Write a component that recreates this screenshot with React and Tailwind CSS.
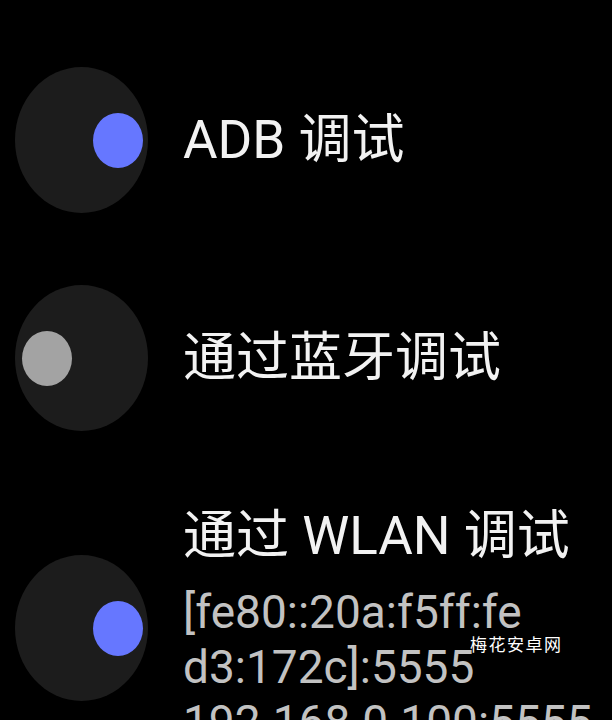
import React from 'react';

function Toggle({ on }) {
  return (
    <div
      className={`flex h-[146px] w-[133px] shrink-0 items-center rounded-[50%] bg-[#1c1c1c] ${
        on ? 'justify-end pr-[5px]' : 'justify-start pl-[7px]'
      }`}
    >
      <div className={`h-[55px] w-[50px] rounded-[50%] ${on ? 'bg-[#6677ff]' : 'bg-[#a3a3a3]'}`} />
    </div>
  );
}

function Row({ on, title, lines, className = '' }) {
  return (
    <div className={`flex items-center gap-[35px] pl-[15px] ${className}`}>
      <Toggle on={on} />
      <div className="flex flex-col whitespace-nowrap">
        <div className="text-[53px] leading-[60px] text-[#f2f2f2]">{title}</div>
        {lines && (
          <div className="mt-[19px] text-[46px] leading-[55px] text-[#c2c2c2]">
            {lines.map((l) => (
              <div key={l}>{l}</div>
            ))}
          </div>
        )}
      </div>
    </div>
  );
}

export default function App() {
  return (
    <div className="relative h-[720px] w-full overflow-hidden bg-black font-[Roboto,'Noto_Sans_CJK_SC',sans-serif]">
      <div className="flex flex-col pt-[67px]">
        <Row on title="ADB 调试" />
        <Row on={false} title="通过蓝牙调试" className="mt-[72px]" />
        <Row
          on
          title="通过 WLAN 调试"
          lines={['[fe80::20a:f5ff:fe', 'd3:172c]:5555', '192.168.0.100:5555']}
          className="mt-[75px]"
        />
      </div>

      {/* watermark */}
      <div className="absolute left-[470px] top-[634px] text-[17px] leading-[22px] tracking-[1.5px] text-white">
        梅花安卓网
      </div>
    </div>
  );
}
